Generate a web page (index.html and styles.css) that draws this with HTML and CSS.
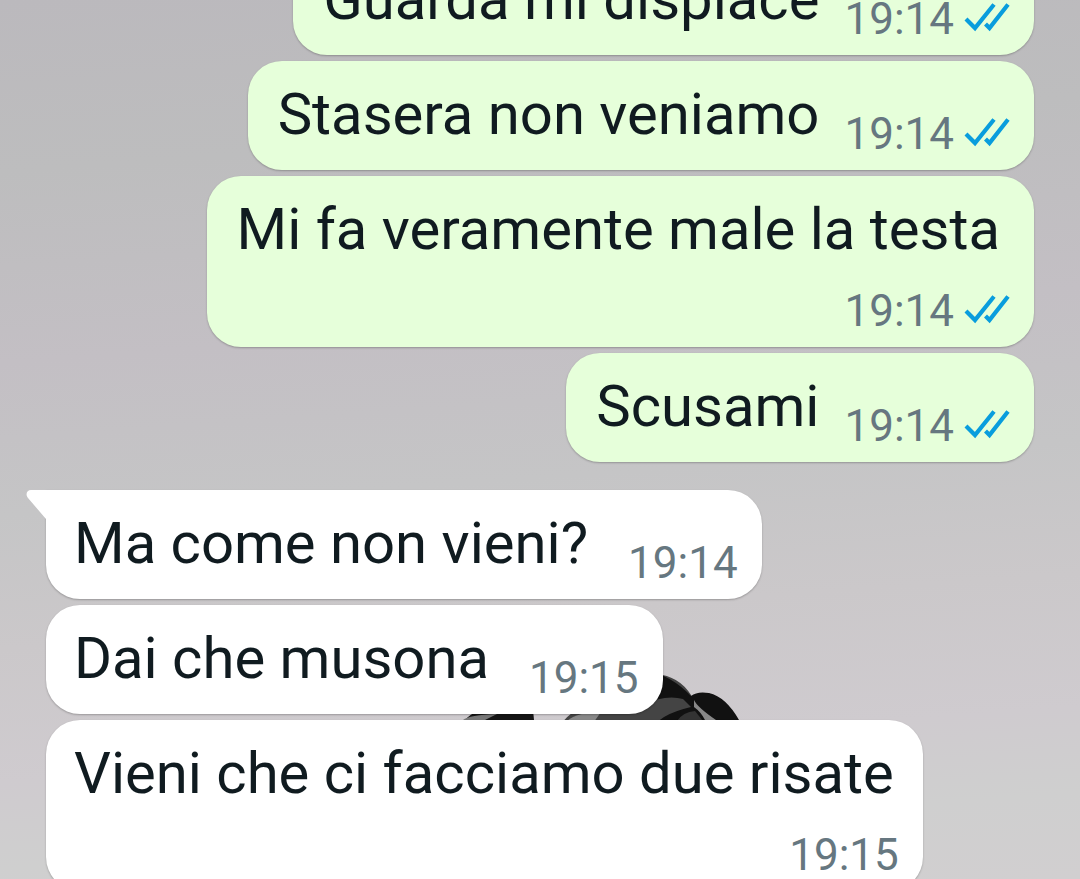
FILE: index.html
```
<!DOCTYPE html>
<html lang="it">
<head>
    <meta charset="UTF-8">
    <meta name="viewport" content="width=device-width, initial-scale=1.0">
    <title>Chat</title>
    <link rel="stylesheet" href="styles.css">
</head>
<body>
    <!-- double check mark, reused by every sent message -->
    <svg class="defs" width="0" height="0" aria-hidden="true">
        <symbol id="ticks" viewBox="0 0 46 30">
            <path d="M2 17L11 26L30 2.500M21.500 22L25.500 26L44 2.500" fill="none" stroke="currentColor" stroke-width="4.200"/>
        </symbol>
    </svg>

    <main class="chat">
        <!-- wallpaper subject, mostly hidden behind the messages -->
        <svg class="wallpaper" viewBox="0 0 300 80" aria-hidden="true">
            <path d="M10 80Q13 65 30 60H82L84 80Z" fill="#151515"/>
            <path d="M12 70Q18 65 46 64L34 70Z" fill="#777"/>
            <path d="M108 80Q112 62 150 50L205 24Q228 26 240 45L252 70V80Z" fill="#444"/>
            <path d="M112 75Q122 62 150 62L140 76Z" fill="#888"/>
            <path d="M194 20Q220 25 240 46Q246 41 258 43Q275 47 288 70V80H202Q206 65 240 57L232 49Q215 44 190 55Z" fill="#111"/>
            <path d="M243 50Q246 57 265 70H254Q250 62 243 57Z" fill="#888"/>
            <path d="M226 71Q232 62 244 61L252 71Z" fill="#333"/>
        </svg>

        <section class="messages">
            <article class="bubble sent">
                <p>Guarda mi dispiace</p>
                <div class="meta"><time>19:14</time><svg class="ticks" role="img" aria-label="Letto"><use href="#ticks"/></svg></div>
            </article>
            <article class="bubble sent">
                <p>Stasera non veniamo</p>
                <div class="meta"><time>19:14</time><svg class="ticks" role="img" aria-label="Letto"><use href="#ticks"/></svg></div>
            </article>
            <article class="bubble sent long">
                <p>Mi fa veramente male la testa</p>
                <div class="meta"><time>19:14</time><svg class="ticks" role="img" aria-label="Letto"><use href="#ticks"/></svg></div>
            </article>
            <article class="bubble sent">
                <p>Scusami</p>
                <div class="meta"><time>19:14</time><svg class="ticks" role="img" aria-label="Letto"><use href="#ticks"/></svg></div>
            </article>

            <article class="bubble received first">
                <svg class="tail" viewBox="0 0 24 32" aria-hidden="true"><path d="M24 0H5C1 0-1 4 2 8L20 29V32H24Z" fill="#fff"/></svg>
                <p>Ma come non vieni?</p>
                <div class="meta"><time>19:14</time></div>
            </article>
            <article class="bubble received">
                <p>Dai che musona</p>
                <div class="meta"><time>19:15</time></div>
            </article>
            <article class="bubble received long">
                <p>Vieni che ci facciamo due risate</p>
                <div class="meta"><time>19:15</time></div>
            </article>
        </section>
    </main>
</body>
</html>
```
FILE: styles.css
```
body {
    margin: 0;
    font-family: Roboto, sans-serif;
    color: #101b20;
    overflow: hidden;
}

.defs {
    position: absolute;
}

.chat {
    position: relative;
    height: 100vh;
    overflow: hidden;
    background: linear-gradient(176deg, #bbb9bd 0%, #bdbdbe 18%, #c3bfc4 38%, #c5c5c6 54%, #cbc8ca 68%, #cfcbcf 82%, #cfcfcf 91%, #d1cfd0 100%);
}

.wallpaper {
    position: absolute;
    top: 650px;
    left: 451px;
    width: 300px;
    height: 80px;
}

.messages {
    position: relative;
    display: flex;
    flex-direction: column;
    gap: 6px;
    margin-top: -54px; /* scrolled part way through the first message */
    padding: 0 46px;
}

.bubble {
    display: flex;
    align-items: flex-end;
    padding: 19px 24px 10px 28px;
    border-radius: 34px;
    box-shadow: 0 1px 2px rgba(0, 0, 0, 0.25);
}

.bubble p {
    margin: 0 0 12px;
    font-size: 58px;
    line-height: 68px;
}

.sent {
    align-self: flex-end;
    column-gap: 25px;
    padding-left: 30px;
    background-color: #e6ffda;
}

.received {
    align-self: flex-start;
    column-gap: 40px;
    background-color: #fff;
}

.first {
    position: relative;
    margin-top: 22px;
    border-top-left-radius: 0;
}

.tail {
    position: absolute;
    top: 0;
    left: -20px;
    width: 24px;
    height: 32px;
}

.long {
    flex-direction: column;
    row-gap: 10px;
}

.sent.long p {
    margin-right: 10px;
}

.received.long p {
    margin-right: 5px;
}

.meta {
    display: flex;
    align-items: center;
    gap: 10px;
    font-size: 44px;
    line-height: 52px;
    color: #667780;
}

.ticks {
    width: 46px;
    height: 30px;
    margin-bottom: 4px;
    color: #099ddd;
}
```
